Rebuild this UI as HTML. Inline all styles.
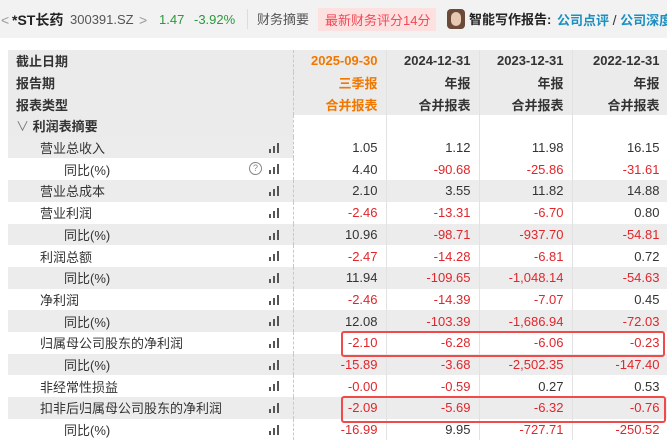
<!DOCTYPE html>
<html><head><meta charset="utf-8"><style>
*{margin:0;padding:0;box-sizing:border-box}
body{width:667px;height:443px;overflow:hidden;background:#fff;font-family:"Liberation Sans","Noto Sans CJK SC",sans-serif;font-size:13px;color:#333;position:relative}
.top{position:absolute;left:0;top:0;width:667px;height:38px;background:#f2f2f2;white-space:nowrap}
.top span{position:absolute;top:11px;font-size:14px;line-height:18px}
table{position:absolute;left:8px;top:50px;border-collapse:collapse;table-layout:fixed;width:660px}
td{height:21.7px;padding:0 8px 0 0;text-align:right;white-space:nowrap;border-right:1px solid #e2e2e2;font-size:13px}
td.l{text-align:left;padding-left:8px;border-right:1px dashed #c8c8c8;position:relative}
tr.h td{height:21.7px;background:#ebebeb;font-weight:bold;color:#333}
tr.g td{background:#ececec}
.r{color:#e0262b}
.o{color:#f07800!important}
.bar{position:absolute;left:261px;top:6px;width:12px;height:10px}
.bar i{position:absolute;bottom:0;width:2px;background:#555}
.box{position:absolute;border:2px solid #f04a4a;border-radius:3px}
</style></head><body>
<div class="top">
<span style="left:1px;color:#999">&lt;</span>
<span style="left:12px;font-weight:bold;color:#222">*ST长药</span>
<span style="left:70px;color:#555;font-size:13px">300391.SZ</span>
<span style="left:139px;color:#999">&gt;</span>
<span style="left:159px;color:#2a9a3a;font-size:13px">1.47</span>
<span style="left:194px;color:#2a9a3a;font-size:13px">-3.92%</span>
<span style="left:247px;top:9px;width:1px;height:20px;background:#ddd"></span>
<span style="left:257px;color:#555;font-size:13px">财务摘要</span>
<span style="left:318px;top:8px;width:118px;height:23px;background:#fde0e0"></span>
<span style="left:325px;color:#f04a55;font-size:13px;top:12px">最新财务评分14分</span>
<span style="left:447px;top:9px;width:18px;height:20px;border-radius:4px;background:#6b4a3a"></span>
<span style="left:451px;top:12px;width:10px;height:14px;border-radius:5px;background:#e8c8b0"></span>
<span style="left:469px;font-weight:bold;color:#222;font-size:13px">智能写作报告:</span>
<span style="left:557px;font-weight:bold;color:#1a90c0;font-size:13px">公司点评 <span style="position:static;color:#333;font-weight:normal">/</span> 公司深度</span>
</div>
<table>
<colgroup><col style="width:285px"><col style="width:93px"><col style="width:93px"><col style="width:93px"><col style="width:96px"></colgroup>
<tr class="h"><td class="l">截止日期</td><td class="o">2025-09-30</td><td>2024-12-31</td><td>2023-12-31</td><td>2022-12-31</td></tr>
<tr class="h"><td class="l">报告期</td><td class="o">三季报</td><td>年报</td><td>年报</td><td>年报</td></tr>
<tr class="h"><td class="l">报表类型</td><td class="o">合并报表</td><td>合并报表</td><td>合并报表</td><td>合并报表</td></tr>
<tr><td class="l" style="background:#ebebeb;font-weight:bold"><span style="color:#777;font-weight:normal">∨</span> 利润表摘要</td><td></td><td></td><td></td><td></td></tr>
<tr class="g"><td class="l" style="padding-left:32px">营业总收入<span class="bar"><i style="left:0;height:4px"></i><i style="left:4px;height:7px"></i><i style="left:8px;height:10px"></i></span></td><td style="background:#fff">1.05</td><td style="background:#fff">1.12</td><td style="background:#fff">11.98</td><td style="background:#fff">16.15</td></tr>
<tr><td class="l" style="padding-left:56px">同比(%)<span style="position:absolute;left:241px;top:4px;width:13px;height:13px;border:1px solid #888;border-radius:50%;font-size:9px;line-height:11px;text-align:center;color:#888">?</span><span class="bar"><i style="left:0;height:4px"></i><i style="left:4px;height:7px"></i><i style="left:8px;height:10px"></i></span></td><td>4.40</td><td class="r">-90.68</td><td class="r">-25.86</td><td class="r">-31.61</td></tr>
<tr class="g"><td class="l" style="padding-left:32px">营业总成本<span class="bar"><i style="left:0;height:4px"></i><i style="left:4px;height:7px"></i><i style="left:8px;height:10px"></i></span></td><td>2.10</td><td>3.55</td><td>11.82</td><td>14.88</td></tr>
<tr><td class="l" style="padding-left:32px">营业利润<span class="bar"><i style="left:0;height:4px"></i><i style="left:4px;height:7px"></i><i style="left:8px;height:10px"></i></span></td><td class="r">-2.46</td><td class="r">-13.31</td><td class="r">-6.70</td><td>0.80</td></tr>
<tr class="g"><td class="l" style="padding-left:56px">同比(%)<span class="bar"><i style="left:0;height:4px"></i><i style="left:4px;height:7px"></i><i style="left:8px;height:10px"></i></span></td><td>10.96</td><td class="r">-98.71</td><td class="r">-937.70</td><td class="r">-54.81</td></tr>
<tr><td class="l" style="padding-left:32px">利润总额<span class="bar"><i style="left:0;height:4px"></i><i style="left:4px;height:7px"></i><i style="left:8px;height:10px"></i></span></td><td class="r">-2.47</td><td class="r">-14.28</td><td class="r">-6.81</td><td>0.72</td></tr>
<tr class="g"><td class="l" style="padding-left:56px">同比(%)<span class="bar"><i style="left:0;height:4px"></i><i style="left:4px;height:7px"></i><i style="left:8px;height:10px"></i></span></td><td>11.94</td><td class="r">-109.65</td><td class="r">-1,048.14</td><td class="r">-54.63</td></tr>
<tr><td class="l" style="padding-left:32px">净利润<span class="bar"><i style="left:0;height:4px"></i><i style="left:4px;height:7px"></i><i style="left:8px;height:10px"></i></span></td><td class="r">-2.46</td><td class="r">-14.39</td><td class="r">-7.07</td><td>0.45</td></tr>
<tr class="g"><td class="l" style="padding-left:56px">同比(%)<span class="bar"><i style="left:0;height:4px"></i><i style="left:4px;height:7px"></i><i style="left:8px;height:10px"></i></span></td><td>12.08</td><td class="r">-103.39</td><td class="r">-1,686.94</td><td class="r">-72.03</td></tr>
<tr><td class="l" style="padding-left:32px">归属母公司股东的净利润<span class="bar"><i style="left:0;height:4px"></i><i style="left:4px;height:7px"></i><i style="left:8px;height:10px"></i></span></td><td class="r">-2.10</td><td class="r">-6.28</td><td class="r">-6.06</td><td class="r">-0.23</td></tr>
<tr class="g"><td class="l" style="padding-left:56px">同比(%)<span class="bar"><i style="left:0;height:4px"></i><i style="left:4px;height:7px"></i><i style="left:8px;height:10px"></i></span></td><td class="r">-15.89</td><td class="r">-3.68</td><td class="r">-2,502.35</td><td class="r">-147.40</td></tr>
<tr><td class="l" style="padding-left:32px">非经常性损益<span class="bar"><i style="left:0;height:4px"></i><i style="left:4px;height:7px"></i><i style="left:8px;height:10px"></i></span></td><td class="r">-0.00</td><td class="r">-0.59</td><td>0.27</td><td>0.53</td></tr>
<tr class="g"><td class="l" style="padding-left:32px">扣非后归属母公司股东的净利润<span class="bar"><i style="left:0;height:4px"></i><i style="left:4px;height:7px"></i><i style="left:8px;height:10px"></i></span></td><td class="r">-2.09</td><td class="r">-5.69</td><td class="r">-6.32</td><td class="r">-0.76</td></tr>
<tr><td class="l" style="padding-left:56px">同比(%)<span class="bar"><i style="left:0;height:4px"></i><i style="left:4px;height:7px"></i><i style="left:8px;height:10px"></i></span></td><td class="r">-16.99</td><td>9.95</td><td class="r">-727.71</td><td class="r">-250.52</td></tr>
</table>
<div class="box" style="left:341px;top:331px;width:324px;height:26px"></div>
<div class="box" style="left:341px;top:396px;width:325px;height:27px"></div>
</body></html>
